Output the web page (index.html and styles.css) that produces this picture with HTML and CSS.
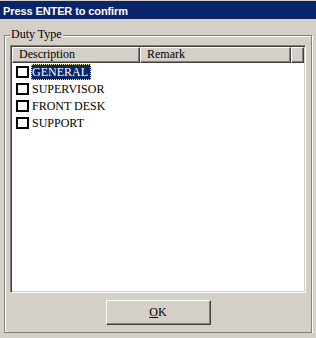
FILE: index.html
```html
<!DOCTYPE html>
<html lang="en">
  <head>
    <meta charset="UTF-8" />
    <meta name="viewport" content="width=device-width, initial-scale=1.0" />
    <title>Press ENTER to confirm</title>
    <link rel="stylesheet" href="styles.css">
  </head>
  <body>
    <div class="titlebar">Press ENTER to confirm</div>

    <div class="group">
      <div class="group-title">Duty Type</div>

      <div class="list">
        <div class="list-header">
          <div class="col">Description</div>
          <div class="col">Remark</div>
          <div class="col"></div>
        </div>

        <div class="row">
          <span class="check"></span>
          <span class="label selected">GENERAL</span>
        </div>
        <div class="row">
          <span class="check"></span>
          <span class="label">SUPERVISOR</span>
        </div>
        <div class="row">
          <span class="check"></span>
          <span class="label">FRONT DESK</span>
        </div>
        <div class="row">
          <span class="check"></span>
          <span class="label">SUPPORT</span>
        </div>
      </div>

      <button class="btn" id="ok"><u>O</u>K</button>
    </div>
  </body>
</html>
```

FILE: styles.css
```css
* {
  box-sizing: border-box;
}

body {
  margin: 0;
  background-color: #d4d0c8;
  font-family: "Liberation Serif", serif;
  font-size: 12px;
  color: #000;
}

.titlebar {
  margin-top: 1px;
  height: 18px;
  padding: 2px 0 0 3px;
  line-height: 16px;
  background-color: #0a246a;
  color: #fff;
  font-family: "Liberation Sans", Arial, sans-serif;
  font-size: 11px;
  font-weight: bold;
  letter-spacing: -0.1px;
}

.group {
  margin: 16px 4px 0 4px;
  padding: 0 0 7px 0;
  border: 1px solid #808080;
  box-shadow: inset 1px 1px #fff, 1px 1px #fff;
}

.group-title {
  width: max-content;
  margin: -9px 0 0 5px;
  padding: 0 1px;
  line-height: 14px;
  background-color: #d4d0c8;
}

.list {
  height: 248px;
  margin: 4px 5px 0 5px;
  padding: 1px;
  background-color: #fff;
  border: 1px solid;
  border-color: #808080 #fff #fff #808080;
  box-shadow: inset 1px 1px #404040, inset -1px -1px #d4d0c8;
}

.list-header {
  display: grid;
  grid-template-columns: 128px 151px 1fr;
  height: 16px;
}

.col {
  padding-left: 6px;
  line-height: 13px;
  background-color: #d4d0c8;
  border-top: 1px solid #fff;
  border-left: 1px solid #fff;
  border-right: 1px solid #404040;
  border-bottom: 1px solid #404040;
  box-shadow: inset -1px -1px #808080;
}

.row {
  display: flex;
  align-items: center;
  height: 17px;
  padding-left: 4px;
}

.check {
  width: 13px;
  height: 12px;
  margin-right: 2px;
  border: 2px solid #000;
  background-color: #fff;
}

.label {
  padding: 0 2px 0 0;
  line-height: 14px;
  border: 1px solid transparent;
}

.selected {
  background-color: #0a246a;
  color: #fff;
  border: 1px dotted #e8e890;
}

.btn {
  display: block;
  width: 105px;
  height: 25px;
  margin: 7px auto 0 auto;
  padding: 0;
  font-family: "Liberation Serif", serif;
  font-size: 12px;
  color: #000;
  background-color: #d4d0c8;
  border-top: 1px solid #fff;
  border-left: 1px solid #fff;
  border-right: 1px solid #404040;
  border-bottom: 1px solid #404040;
  box-shadow: inset -1px -1px #808080;
}
```
